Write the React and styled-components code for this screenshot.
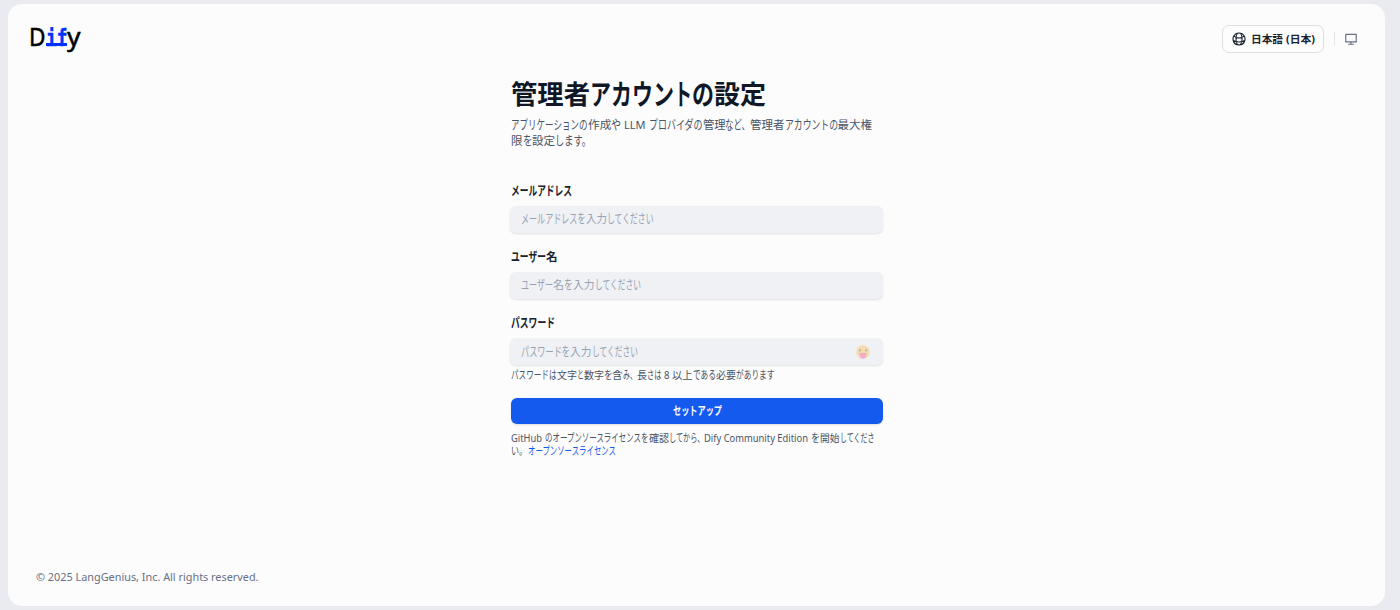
import { useLayoutEffect, useRef, useState } from 'react';
import styled, { createGlobalStyle } from 'styled-components';
import { HiOutlineGlobeAlt } from 'react-icons/hi2';
import { RiComputerLine } from 'react-icons/ri';

const GlobalStyle = createGlobalStyle`
  * {
    box-sizing: border-box;
  }
  body {
    margin: 0;
    background: #e9ebf0;
    font-family: "Noto Sans", "Noto Sans CJK JP", sans-serif;
  }
`;

const Page = styled.div`
  height: 610px;
  padding: 4px 15px 4px 8px;
`;

const Panel = styled.div`
  height: 602px;
  display: flex;
  flex-direction: column;
  background: #fcfcfd;
  border-radius: 14px;
`;

const Header = styled.header`
  height: 70px;
  padding: 0 27px 0 20px;
  display: flex;
  justify-content: space-between;
  align-items: center;
`;

const Logo = styled.div`
  display: flex;
  align-items: baseline;
  height: 36px;
  margin: 0 0 5px 1px;
  line-height: 36px;
  font-size: 24.5px;
  font-weight: 400;
  -webkit-text-stroke: 0.5px currentColor;
  color: #000;
`;

const LogoAccent = styled.span`
  position: relative;
  font-family: "DejaVu Sans Mono", monospace;
  font-size: 23px;
  font-weight: 700;
  color: #0033ff;

  /* shared foot serif under both letters */
  &::after {
    content: "";
    position: absolute;
    left: 0;
    right: 0;
    bottom: 10px;
    height: 2.5px;
    background: currentColor;
  }
`;

const Tools = styled.div`
  display: flex;
  align-items: center;
`;

const LangButton = styled.button`
  display: flex;
  align-items: center;
  width: 102px;
  height: 28px;
  padding: 0 0 0 8px;
  background: #fdfdfe;
  border: 1px solid #dcdfe4;
  border-radius: 7px;
  color: #18222f;
  font-family: inherit;

  svg {
    width: 16px;
    height: 16px;
    margin-right: 4px;
    stroke-width: 1.7;
  }
`;

const Divider = styled.div`
  width: 1px;
  height: 14px;
  margin: 0 9px 0 10px;
  background: #e3e5ea;
`;

const ThemeButton = styled.button`
  display: flex;
  padding: 0;
  border: 0;
  background: none;
  color: #676f83;

  svg {
    width: 14px;
    height: 14px;
  }
`;

const Form = styled.form`
  width: 373px;
  margin: 0 0 0 502px;
  display: flex;
  flex-direction: column;
  flex: 1;
`;

const Line = styled.div`
  display: flex;
  align-items: center;
  white-space: pre;
  font-size: ${p => p.$size || 11.5}px;
  line-height: ${p => p.$height || 16}px;
  font-weight: ${p => p.$weight || 400};
  color: ${p => p.$color || '#495464'};
`;

const Title = styled.h1`
  margin: 0 0 0 1px;
  height: 38px;
  padding-top: 1px;
`;

const Intro = styled.div`
  margin: 5px 0 0 1px;
  height: 66px;
`;

const Field = styled.div`
  height: ${p => p.$h || 66.2}px;
`;

const Label = styled.label`
  display: block;
  height: 22.5px;
  margin-left: 1px;
`;

const InputBox = styled.div`
  height: 27.5px;
  padding: 0 13px 0 11px;
  display: flex;
  align-items: center;
  justify-content: space-between;
  background: #eff1f5;
  border-radius: 6px;
  box-shadow: 0 1px 2px rgba(16, 24, 40, 0.12);
`;

const Hint = styled.div`
  margin: 1.2px 0 0 1px;
`;

const Submit = styled.button`
  display: flex;
  align-items: center;
  justify-content: center;
  width: 372px;
  height: 26px;
  margin: 14.6px 0 0 1px;
  padding: 0;
  border: 0;
  border-radius: 6px;
  background: #155aef;
  box-shadow: 0 1px 2px rgba(9, 9, 11, 0.12);
  font-family: inherit;
`;

const License = styled.div`
  margin: 8px 0 0 1px;
`;

const Footer = styled.footer`
  height: 37px;
  padding-left: 28px;
`;

const FitBox = styled.span`
  display: inline-block;
  flex: none;
  white-space: pre;
`;

const FitText = styled.span`
  display: inline-block;
  transform-origin: 0 50%;
`;

const KANA = /^[\u3001-\u30ff]+$/;

// sets a run of text to a fixed advance width (narrow UI kana)
function Fit({ w, gap = 0, children }) {
  const ref = useRef(null);
  const [scale, setScale] = useState(null);
  useLayoutEffect(() => {
    if (scale === null) setScale(w / ref.current.getBoundingClientRect().width);
  }, [w, scale]);
  const tall = KANA.test(children) ? 1.1 : 1;
  return (
    <FitBox style={{ width: w, marginLeft: gap }}>
      <FitText ref={ref} style={{ transform: scale ? `scale(${scale}, ${tall})` : 'none' }}>{children}</FitText>
    </FitBox>
  );
}

function Text({ runs, size, height, weight, color }) {
  return (
    <Line $size={size} $height={height} $weight={weight} $color={color}>
      {runs.map(([text, w, gap], i) => <Fit key={i} w={w} gap={gap}>{text}</Fit>)}
    </Line>
  );
}

const Face = () => (
  <svg width="14" height="14" viewBox="0 0 14 14" opacity="0.42">
    <circle cx="7" cy="7" r="6.7" fill="#ffc04d" />
    <path d="M3 4.3l2 1-2 1M11 4.3l-2 1 2 1" fill="none" stroke="#5c4433" strokeWidth="0.9" />
    <path d="M3.3 8h7.4c0 2-1.6 3.4-3.7 3.4S3.3 10 3.3 8z" fill="#d0406c" />
    <path d="M4.2 8.6h5.6v3a2.8 2.2 0 0 1-5.6 0z" fill="#ff4c96" />
  </svg>
);

const PLACEHOLDER = '#98a2b2';
const DARK = '#18222f';

function Install() {
  return (
    <Page>
      <Panel>
        <Header>
          <Logo>
            <Fit w={16.5}>D</Fit>
            <LogoAccent><Fit w={21.5}>if</Fit></LogoAccent>
            <Fit w={13.5}>y</Fit>
          </Logo>
          <Tools>
            <LangButton type="button">
              <HiOutlineGlobeAlt />
              <Text size={10.7} weight={700} color={DARK} runs={[['日本語', 32], ['(日本)', 29, 2.5]]} />
            </LangButton>
            <Divider />
            <ThemeButton type="button"><RiComputerLine /></ThemeButton>
          </Tools>
        </Header>
        <Form>
          <Title>
            <Text
              size={26.3}
              height={38}
              weight={700}
              color="#101828"
              runs={[['管理者', 79], ['アカウン', 84], ['ト', 18], ['の', 22], ['設定', 52]]}
            />
          </Title>
          <Intro>
            <Text
              height={16.4}
              runs={[
                ['アプリケーションの', 76.5], ['作成', 23.5], ['や', 10], ['LLM', 21.5, 3], ['プロバイダの', 53.5, 3.5],
                ['管理', 22.5], ['など、', 25], ['管理者', 34.5], ['アカウントの', 53], ['最大権', 34.5],
              ]}
            />
            <Text height={16.4} runs={[['限', 11.5], ['を', 9.5], ['設定', 23], ['します。', 36]]} />
          </Intro>
          <Field>
            <Label><Text weight={700} color={DARK} runs={[['メールアドレス', 61]]} /></Label>
            <InputBox>
              <Text color={PLACEHOLDER} runs={[['メールアドレスを', 64.5], ['入力', 21], ['してください', 46.5]]} />
            </InputBox>
          </Field>
          <Field>
            <Label><Text weight={700} color={DARK} runs={[['ユーザー', 35], ['名', 11.5]]} /></Label>
            <InputBox>
              <Text color={PLACEHOLDER} runs={[['ユーザー', 32], ['名', 11], ['を', 9], ['入力', 21.5], ['してください', 46]]} />
            </InputBox>
          </Field>
          <Field $h={50.4}>
            <Label><Text weight={700} color={DARK} runs={[['パスワード', 44]]} /></Label>
            <InputBox>
              <Text color={PLACEHOLDER} runs={[['パスワードを', 49], ['入力', 21.5], ['してください', 46]]} />
              <Face />
            </InputBox>
          </Field>
          <Hint>
            <Text
              size={10.5}
              runs={[
                ['パスワードは', 45.5], ['文字', 20], ['と', 7], ['数字', 20], ['を', 8.5], ['含', 10.5], ['み、', 14],
                ['長', 10], ['さは', 14.5], ['8', 5.5, 2.5], ['以上', 20.5, 3], ['である', 23], ['必要', 20], ['があります', 38.5],
              ]}
            />
          </Hint>
          <Submit type="button">
            <Text size={10.7} weight={700} color="#fff" runs={[['セットアップ', 49]]} />
          </Submit>
          <License>
            <Text
              size={10.5}
              height={13.2}
              runs={[
                ['GitHub', 31], ['のオープンソースライセンスを', 103.5, 3], ['確認', 20], ['してから、', 35.5],
                ['Dify Community Edition', 104], ['を', 9, 3], ['開始', 19.5], ['してくださ', 34.5],
              ]}
            />
            <Line>
              <Text size={10.5} height={13.2} runs={[['い。', 16]]} />
              <Text size={10.5} height={13.2} color="#155aef" runs={[['オープンソースライセンス', 88, 1]]} />
            </Line>
          </License>
        </Form>
        <Footer>
          <Text size={11.5} color="#676f83" runs={[['© 2025 LangGenius, Inc. All rights reserved.', 222.5]]} />
        </Footer>
      </Panel>
    </Page>
  );
}

export default function App() {
  return (
    <>
      <GlobalStyle />
      <Install />
    </>
  );
}
